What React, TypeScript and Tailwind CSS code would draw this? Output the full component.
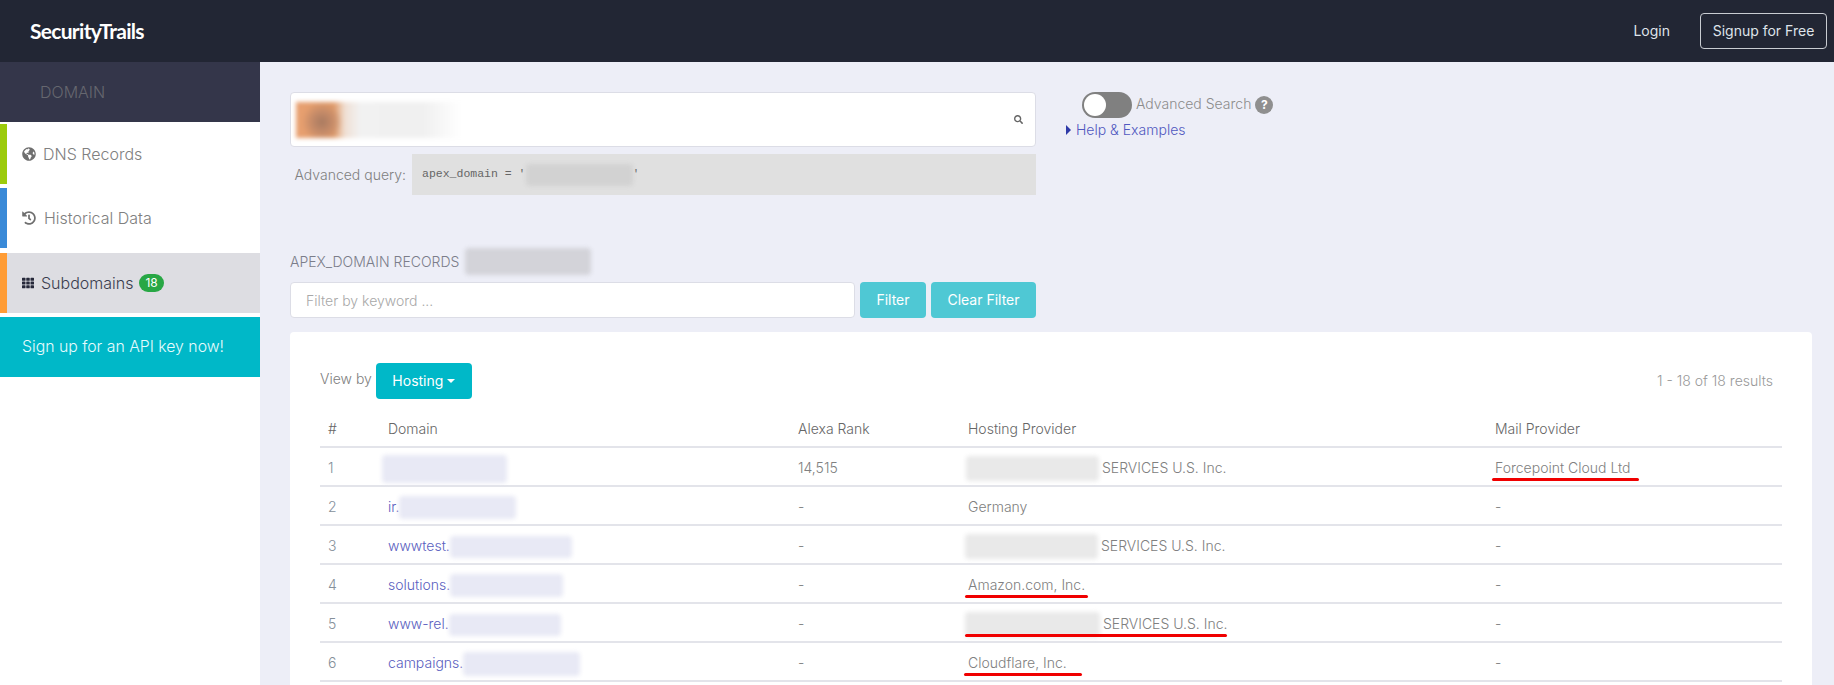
import { FaGlobeAmericas, FaHistory, FaSearch, FaTh } from "react-icons/fa";

type Row = {
  id: number;
  prefix: string;
  domainBlur: string;
  rank: string;
  hostBlur?: string;
  host: string;
  hostMark?: string;
  mail: string;
  mailMark?: boolean;
};

const rows: Row[] = [
  {
    id: 1,
    prefix: "",
    domainBlur: "w-[125px] h-[28px] -ml-[6px]",
    rank: "14,515",
    hostBlur: "w-[133px] h-[25px] -ml-[2px]",
    host: "SERVICES U.S. Inc.",
    mail: "Forcepoint Cloud Ltd",
    mailMark: true,
  },
  {
    id: 2,
    prefix: "ir.",
    domainBlur: "w-[117px] h-[23px]",
    rank: "-",
    host: "Germany",
    mail: "-",
  },
  {
    id: 3,
    prefix: "wwwtest.",
    domainBlur: "w-[122px] h-[22px]",
    rank: "-",
    hostBlur: "w-[133px] h-[25px] -ml-[3px]",
    host: "SERVICES U.S. Inc.",
    mail: "-",
  },
  {
    id: 4,
    prefix: "solutions.",
    domainBlur: "w-[113px] h-[23px]",
    rank: "-",
    host: "Amazon.com, Inc.",
    hostMark: "w-[123px] -left-[3px]",
    mail: "-",
  },
  {
    id: 5,
    prefix: "www-rel.",
    domainBlur: "w-[112px] h-[22px]",
    rank: "-",
    hostBlur: "w-[135px] h-[25px] -ml-[3px]",
    host: "SERVICES U.S. Inc.",
    hostMark: "w-[262px] -left-[3px]",
    mail: "-",
  },
  {
    id: 6,
    prefix: "campaigns.",
    domainBlur: "w-[117px] h-[24px]",
    rank: "-",
    host: "Cloudflare, Inc.",
    hostMark: "w-[118px] -left-[4px]",
    mail: "-",
  },
];

// redacted bits of the screenshot, negative margin keeps them out of the line height
function Blur({ className }: { className: string }) {
  return <span className={`inline-block align-middle -my-[12px] rounded-sm blur-[2px] ${className}`} />;
}

function NavItem({
  stripe,
  active,
  icon,
  gap,
  children,
}: {
  stripe: string;
  active?: boolean;
  icon: React.ReactNode;
  gap: string;
  children: React.ReactNode;
}) {
  return (
    <div className={`flex h-[60px] items-center ${active ? "bg-[#dddde2] text-[#3a3c4e]" : "text-[#808080]"}`}>
      <div className={`h-full w-[7px] shrink-0 ${stripe}`} />
      <div className={`ml-[15px] flex items-center text-base font-light ${gap}`}>
        {icon}
        {children}
      </div>
    </div>
  );
}

export default function App() {
  return (
    <div className="h-[685px] overflow-hidden bg-[#edeef7] text-sm font-light text-[#808080] font-['Inter',sans-serif]">
      <header className="flex h-[62px] items-center justify-between bg-[#222634] pl-[30px] pr-[7px]">
        <span className="text-[21px] font-bold tracking-[-0.7px] text-white font-['Lato',sans-serif]">SecurityTrails</span>
        <div className="flex items-center">
          <span className="mr-[30px] text-sm font-normal text-[#dfe3ea]">Login</span>
          <span className="flex h-[36px] w-[127px] items-center justify-center rounded border border-[#c9ccd2] text-sm font-normal text-[#dfe3ea]">
            Signup for Free
          </span>
        </div>
      </header>

      <div className="flex h-[623px]">
        <aside className="w-[260px] shrink-0 bg-white">
          <div className="flex h-[60px] items-center bg-[#34364a] pl-[40px] text-base text-[#66676f]">DOMAIN</div>
          <div className="mt-[2px] flex flex-col gap-[4px]">
            <NavItem stripe="bg-[#9ccb0c]" gap="gap-[7px]" icon={<FaGlobeAmericas className="text-[14px] text-[#6f6f6f]" />}>
              DNS Records
            </NavItem>
            <NavItem stripe="bg-[#3a8ad8]" gap="gap-[8px]" icon={<FaHistory className="text-[14px] text-[#6f6f6f]" />}>
              Historical Data
            </NavItem>
            <div className="mt-px">
              <NavItem stripe="bg-[#ff9c35]" gap="gap-[7px]" active icon={<FaTh className="text-[12px] text-[#26283a]" />}>
                <span>Subdomains</span>
                <span className="-ml-[1px] rounded-full bg-[#28a745] px-[6px] py-[1px] text-xs font-normal leading-[16px] text-white">18</span>
              </NavItem>
            </div>
            <div className="flex h-[60px] items-center bg-[#00b8c8] pl-[22px] text-[15.8px] text-[#e6fbfd]">Sign up for an API key now!</div>
          </div>
        </aside>

        <main className="min-w-0 flex-1 pl-[30px] pr-[22px] pt-[30px]">
          <div className="flex">
            <div className="w-[746px] shrink-0">
              <div className="flex h-[55px] items-center justify-between rounded border border-[#dcdde6] bg-white pl-[5px] pr-[12px]">
                <div className="h-[36px] w-[188px] blur-[2px] bg-[radial-gradient(circle_at_26px_20px,#a87a60_0,#c48a68_10px,transparent_20px),linear-gradient(90deg,#e8a070_0%,#e09a68_20%,#f0e0d4_26%,#f1f1f1_34%,#f0f0f0_68%,#ffffff_88%)]" />
                <FaSearch className="text-[9px] text-[#666]" />
              </div>
              <div className="mt-[7px] flex h-[41px]">
                <span className="flex w-[122px] shrink-0 items-center justify-end pr-[6px] text-[#808080]">Advanced query:</span>
                <div className="flex flex-1 items-center bg-[#e0e0e0] pl-[10px] text-[11.5px] font-normal text-[#666] font-['Liberation_Mono',monospace]">
                  apex_domain = '
                  <Blur className="h-[22px] w-[107px] bg-[#d2d2d2]" />'
                </div>
              </div>
              <div className="mt-[53px] flex h-[27px] items-center gap-[6px]">
                <span className="text-[#7b7d8a]">APEX_DOMAIN RECORDS</span>
                <Blur className="h-[27px] w-[126px] bg-[#d3d3d9]" />
              </div>
              <div className="mt-[7px] flex h-[36px] gap-[5px]">
                <div className="flex w-[565px] items-center rounded border border-[#dcdde6] bg-white pl-[15px] pt-px text-[#a8a8a8]">Filter by keyword ...</div>
                <span className="flex w-[66px] items-center justify-center rounded bg-[#4fc8d4] font-normal text-white">Filter</span>
                <span className="flex w-[105px] items-center justify-center rounded bg-[#4fc8d4] font-normal text-white">Clear Filter</span>
              </div>
            </div>
            <div className="ml-[30px] mt-0">
              <div className="ml-[16px] flex h-[26px] items-center">
                <div className="flex h-[26px] w-[50px] items-center rounded-full bg-[#808080] pl-[2px]">
                  <div className="h-[22px] w-[22px] rounded-full bg-white" />
                </div>
                <span className="-mt-[2px] ml-[4px] text-[#8c8c8c]">Advanced Search</span>
                <span className="ml-[4px] flex h-[18px] w-[18px] items-center justify-center rounded-full bg-[#8f8f8f] text-xs font-bold text-white">?</span>
              </div>
              <div className="mt-[2px] flex items-center text-[#5058c0]">
                <span className="mr-[5px] h-0 w-0 border-y-[5px] border-l-[5px] border-y-transparent border-l-[#2f3aa8]" />
                Help &amp; Examples
              </div>
            </div>
          </div>

          <div className="mt-[14px] h-[400px] rounded-t bg-white pl-[30px] pr-[30px] pt-[31px]">
            <div className="flex h-[36px] items-center justify-between pr-[9px]">
              <div className="flex items-center gap-[4px]">
                <span className="-mt-[4px]">View by</span>
                <span className="flex h-[36px] w-[96px] items-center justify-center gap-[4px] rounded bg-[#00b8c8] font-normal text-white">
                  Hosting
                  <span className="h-0 w-0 border-x-[4px] border-t-[4px] border-x-transparent border-t-white" />
                </span>
              </div>
              <span className="text-[#999]">1 - 18 of 18 results</span>
            </div>

            <table className="mt-[12px] w-full table-fixed border-collapse text-left">
              <thead>
                <tr className="h-[36px] border-b-2 border-[#e3e4ea] text-[#666]">
                  <th className="w-[60px] pl-[8px] font-light">#</th>
                  <th className="w-[410px] pl-[8px] font-light">Domain</th>
                  <th className="w-[170px] pl-[8px] font-light">Alexa Rank</th>
                  <th className="w-[527px] pl-[8px] font-light">Hosting Provider</th>
                  <th className="pl-[8px] font-light">Mail Provider</th>
                </tr>
              </thead>
              <tbody>
                {rows.map((row) => (
                  <tr key={row.id} className="h-[39px] border-b-2 border-[#e3e4ea]">
                    <td className="pl-[8px] pt-[2px] text-[#85909a]">{row.id}</td>
                    <td className="pl-[8px] pt-[2px] text-[#5a60c0]">
                      {row.prefix}
                      <Blur className={`bg-[#e8e9f5] ${row.domainBlur}`} />
                    </td>
                    <td className="pl-[8px] pt-[2px]">{row.rank}</td>
                    <td className="pl-[8px] pt-[2px]">
                      <span className="relative inline-block whitespace-nowrap">
                        {row.hostBlur && <Blur className={`mr-[3px] bg-[#e9e9e9] ${row.hostBlur}`} />}
                        {row.host}
                        {row.hostMark && <span className={`absolute -bottom-[3px] h-[3px] rounded-full bg-[#f00000] ${row.hostMark}`} />}
                      </span>
                    </td>
                    <td className="pl-[8px] pt-[2px]">
                      <span className="relative inline-block">
                        {row.mail}
                        {row.mailMark && <span className="absolute -bottom-[3px] -left-[3px] h-[3px] w-[147px] rounded-full bg-[#f00000]" />}
                      </span>
                    </td>
                  </tr>
                ))}
              </tbody>
            </table>
          </div>
        </main>
      </div>
    </div>
  );
}
